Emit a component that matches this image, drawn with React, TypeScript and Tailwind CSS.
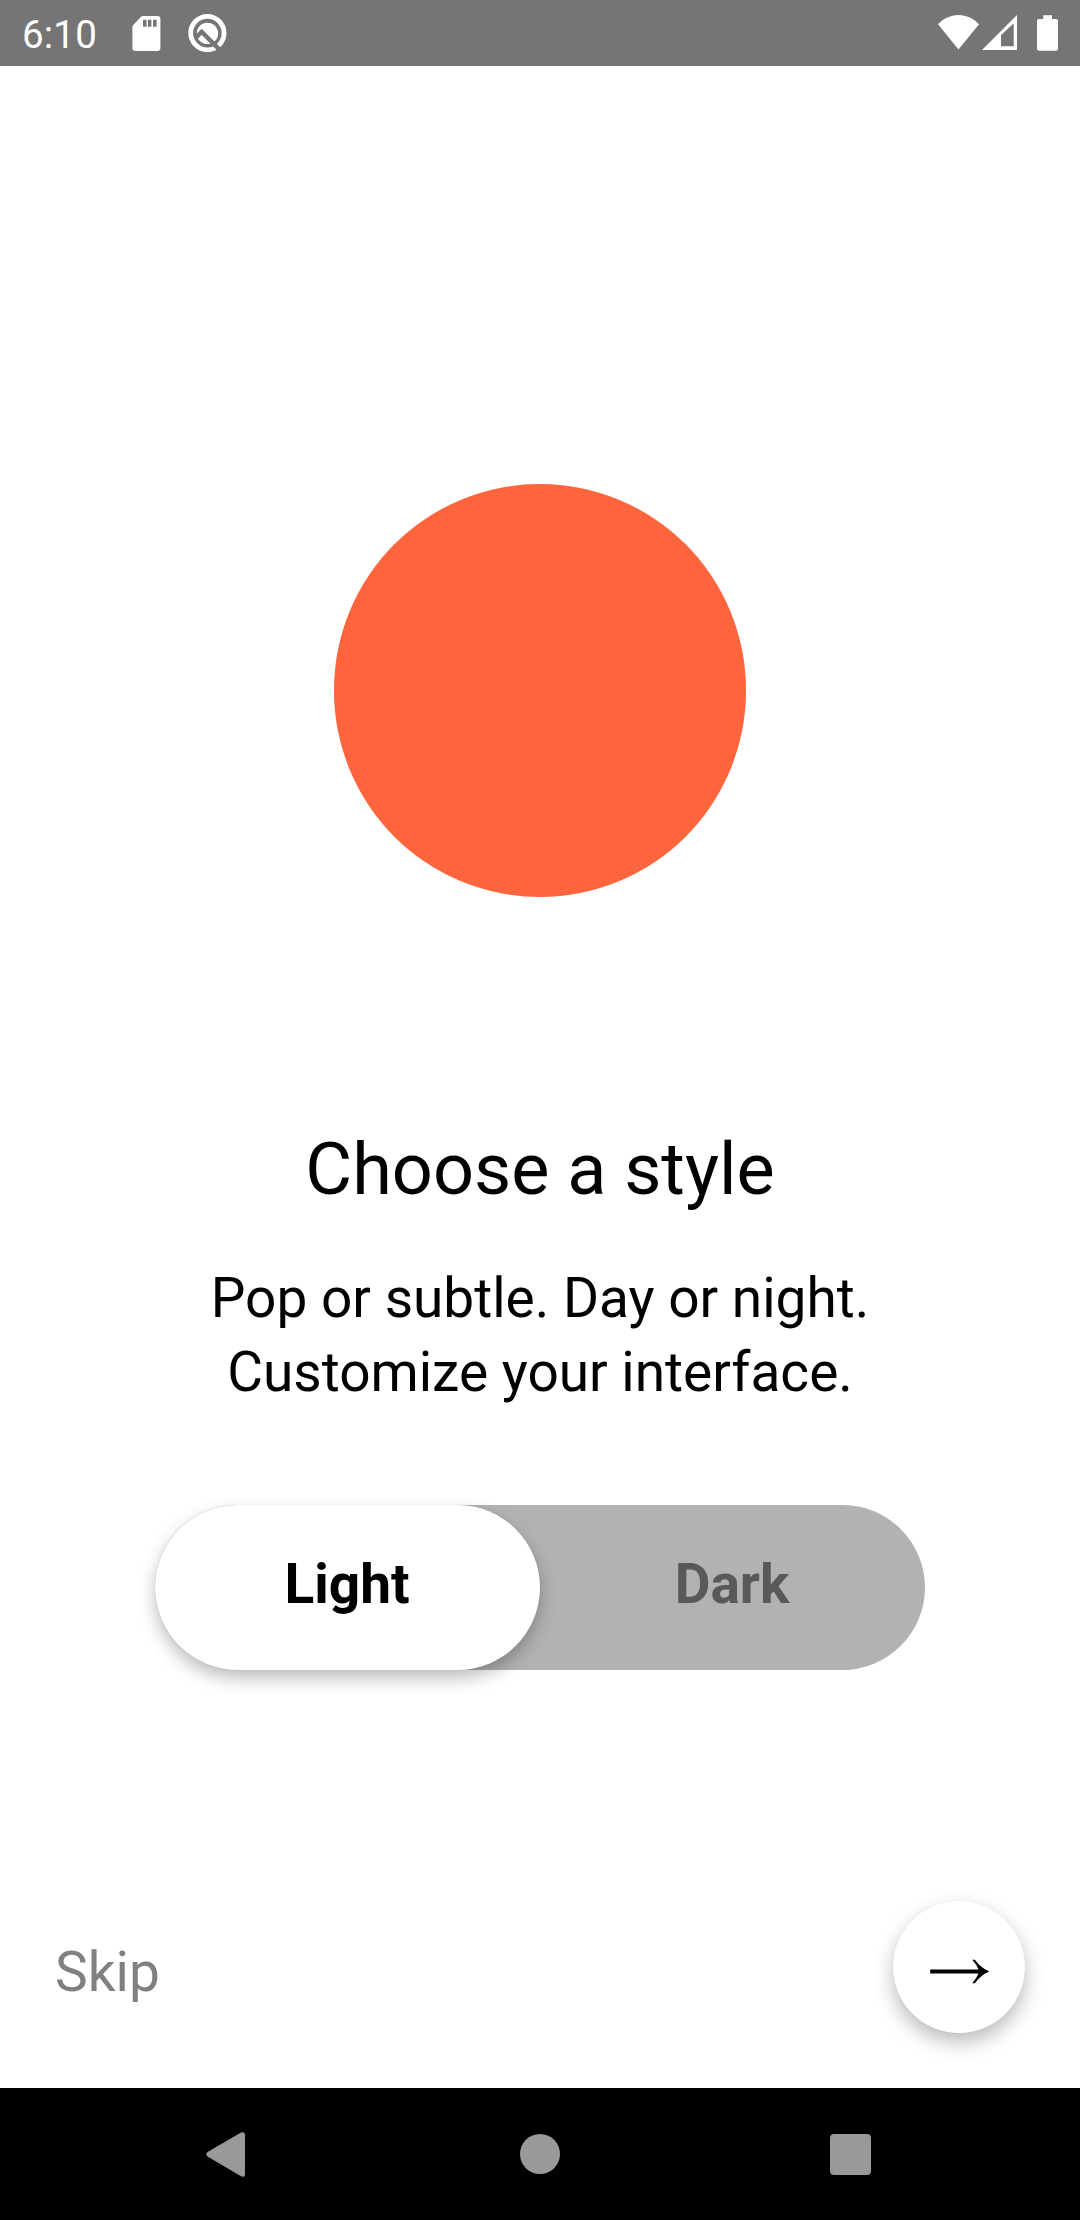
import React from "react";

function StatusBar() {
  return (
    <header className="flex h-[66px] items-center justify-between bg-[#757575] text-white">
      <div className="flex h-full items-center">
        <span className="w-[110px] pl-[22px] pt-1 text-[38.5px] leading-[66px] tracking-[0.2px]">6:10</span>
        <svg className="ml-[22px]" width="29" height="66" viewBox="132 0 29 66" aria-hidden="true">
          <path d="M142.6 16H157.3Q160.4 16 160.4 19V48Q160.4 51 157.3 51H135.5Q132.4 51 132.4 48V27.2Q132.4 26 133.3 25.1L141.3 16.6Q141.9 16 142.6 16Z" fill="#fff" />
          <path d="M143 19.7h3.5v7H143zM147.9 19.7h3.5v7h-3.5zM153.1 19.7h3.5v7h-3.5z" fill="#757575" />
        </svg>
        <svg className="ml-[26px]" width="41" height="66" viewBox="187 0 41 66" aria-hidden="true">
          <circle cx="207.4" cy="33.1" r="16.7" fill="none" stroke="#fff" strokeWidth="4.8" />
          <circle cx="207.4" cy="33.4" r="10.7" fill="#fff" />
          <path d="M195.3 38.2L201.7 31.8L221.5 51.6" fill="none" stroke="#757575" strokeWidth="4.4" />
        </svg>
      </div>
      <div className="flex h-full items-center pr-[21px]">
        <svg width="42" height="66" viewBox="938 0 42 66" aria-hidden="true">
          <path d="M958.5 49.6L938 24.3C943.5 18.6 950.5 15.1 958.5 15.1S973.5 18.6 979 24.3Z" fill="#fff" />
        </svg>
        <svg className="ml-0.5" width="35" height="66" viewBox="982 0 35 66" aria-hidden="true">
          <path fillRule="evenodd" d="M982 50L1017 15V50ZM1001 35.3V46.2H1013.7V23.3Z" fill="#fff" />
        </svg>
        <svg className="ml-5" width="22" height="66" viewBox="1037 0 22 66" aria-hidden="true">
          <path d="M1043.2 15.3h8.8v3.7h4q2 0 2 2v27.7q0 2-2 2h-17q-2 0-2-2V21q0-2 2-2h4.2z" fill="#fff" />
        </svg>
      </div>
    </header>
  );
}

function StyleToggle() {
  return (
    <div className="mt-[96px] flex h-[165px] w-[770px] rounded-full bg-[#b2b2b2] text-[55px] font-bold">
      <button className="w-[385px] rounded-full bg-white pb-[6px] pr-px text-black shadow-[0_8px_17px_rgba(0,0,0,0.26),0_0_2px_rgba(0,0,0,0.08)]">
        Light
      </button>
      <button className="w-[385px] rounded-full pb-[6px] pr-px text-[#595959]">Dark</button>
    </div>
  );
}

function NavigationBar() {
  return (
    <nav className="flex h-[132px] items-center justify-between bg-black pl-[206px] pr-[209px]">
      <svg width="40" height="46" viewBox="206 2131 40 46" aria-label="Back">
        <path d="M207.5 2152.1L241 2132.6Q245 2131 245 2134.8V2174.2Q245 2178 241 2176.2L207.5 2156.4Q205.3 2154.3 207.5 2152.1Z" fill="#999" />
      </svg>
      <div className="ml-1 size-10 rounded-full bg-[#999]" />
      <div className="size-[41px] rounded-[4px] bg-[#999]" />
    </nav>
  );
}

export default function App() {
  return (
    <div className="flex h-[2220px] w-[1080px] flex-col overflow-hidden bg-white font-['Roboto',sans-serif] text-black">
      <StatusBar />
      <main className="flex flex-1 flex-col items-center pt-[418px]">
        <div className="size-[412.5px] rounded-full bg-[#ff653d]" />
        <h1 className="mt-[231px] text-[72px] leading-[84px]">Choose a style</h1>
        <p className="mt-[49.5px] text-center text-[55px] leading-[74px]">
          Pop or subtle. Day or night.
          <br />
          Customize your interface.
        </p>
        <StyleToggle />
        <div className="mt-[231px] flex w-full items-center justify-between px-[55px]">
          <button className="pt-[10px] text-[55px] leading-[66px] text-[#808080]">Skip</button>
          <button
            aria-label="Next"
            className="flex size-[132px] items-center justify-center rounded-full bg-white shadow-[0_9px_20px_rgba(0,0,0,0.27),0_0_2px_rgba(0,0,0,0.06)]"
          >
            <svg width="132" height="132" viewBox="893 1901 132 132" aria-hidden="true">
              <path d="M930.2 1969.4H978.5Q976.5 1964.5 972.3 1959.8H974.8Q981 1968 989.2 1971.5Q981 1975 974.8 1983.2H972.3Q976.5 1978.5 978.5 1973.6H930.2Z" fill="#000" />
            </svg>
          </button>
        </div>
      </main>
      <NavigationBar />
    </div>
  );
}
